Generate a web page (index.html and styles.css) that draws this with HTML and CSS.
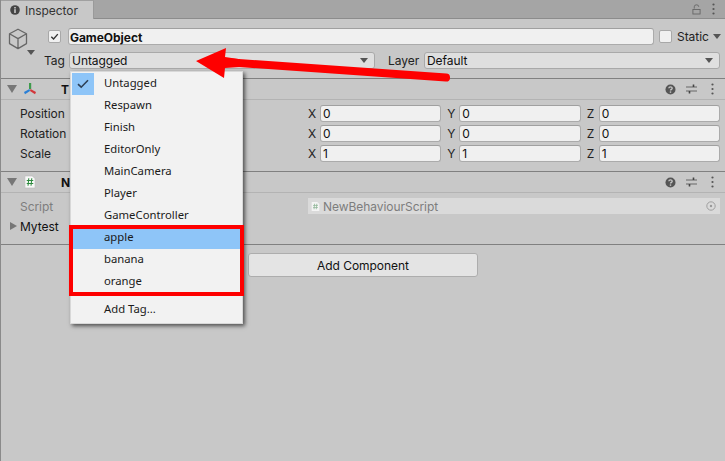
FILE: index.html
```html
<!DOCTYPE html>
<html lang="en">
<head>
<meta charset="utf-8">
<title>Inspector</title>
<link rel="stylesheet" href="styles.css">
</head>
<body>
<div class="window">
  <div class="tabbar">
    <div class="tab">
      <svg class="tab-icon" viewBox="0 0 10 10"><circle cx="5" cy="5" r="4.8" fill="#444"/><rect x="4.2" y="4.2" width="1.6" height="3.8" fill="#c8c8c8"/><rect x="4.2" y="2" width="1.6" height="1.5" fill="#c8c8c8"/></svg>
      <span>Inspector</span>
    </div>
    <div class="tab-tools">
      <svg class="lock" viewBox="0 0 10 12"><path d="M2.5 5V3a2.5 2.2 0 0 1 5 0" fill="none" stroke="#666" stroke-width="1"/><rect x="1" y="6" width="8" height="5" fill="none" stroke="#666" stroke-width="1"/></svg>
      <svg class="dots" viewBox="0 0 3 12"><circle cx="1.5" cy="1.5" r="1.1" fill="#555"/><circle cx="1.5" cy="6" r="1.1" fill="#555"/><circle cx="1.5" cy="10.5" r="1.1" fill="#555"/></svg>
    </div>
  </div>

  <section class="object">
    <div class="cube-cell">
      <svg class="cube" viewBox="0 0 20 22"><path d="M10 1.2 18.5 5.8V15.6L10 20.6 1.5 15.6V5.8Z M1.5 5.8 10 10.6 18.5 5.8 M10 10.6V20.6" fill="none" stroke="#666" stroke-width="1.3" stroke-linejoin="round"/></svg>
      <i class="tri tri-cube"></i>
    </div>
    <div class="object-fields">
      <div class="row-name">
        <span class="check"><svg viewBox="0 0 12 12"><path d="M2.5 6.2 5 8.6 9.6 3.4" fill="none" stroke="#333" stroke-width="1.5"/></svg></span>
        <span class="field name">GameObject</span>
        <span class="check static-box"></span>
        <span class="static-label">Static</span>
        <i class="tri tri-static"></i>
      </div>
      <div class="row-tag">
        <span class="tag-label">Tag</span>
        <span class="drop tag-drop">Untagged<i class="tri"></i></span>
        <span class="layer-label">Layer</span>
        <span class="drop layer-drop">Default<i class="tri"></i></span>
      </div>
    </div>
  </section>

  <section class="component">
    <header class="comp-head">
      <i class="fold"></i>
      <svg class="comp-icon" viewBox="0 0 14 14"><rect x="6" y="1" width="2.2" height="6" fill="#3f9a4c"/><path d="M6.5 7 1 10 2 12.2 7 9Z" fill="#2a7fd6"/><path d="M7.5 7 13 10 12 12.2 7 9Z" fill="#d2363a"/></svg>
      <span class="comp-title">T</span>
      <span class="head-tools">
        <svg class="help" viewBox="0 0 11 11"><circle cx="5.5" cy="5.5" r="5" fill="#555"/><path d="M3.8 4.2C3.9 2.4 7.2 2.4 7.2 4.2 7.2 5.4 5.5 5.3 5.5 6.6" fill="none" stroke="#c8c8c8" stroke-width="1.3"/><rect x="4.8" y="7.4" width="1.4" height="1.4" fill="#c8c8c8"/></svg>
        <svg class="sliders" viewBox="0 0 11 10"><path d="M0 3H11M0 7H11" stroke="#666" stroke-width="1"/><path d="M7.5 0.5V3M3.5 7V9.5" stroke="#444" stroke-width="1.6"/></svg>
        <svg class="dots" viewBox="0 0 3 12"><circle cx="1.5" cy="1.5" r="1.1" fill="#555"/><circle cx="1.5" cy="6" r="1.1" fill="#555"/><circle cx="1.5" cy="10.5" r="1.1" fill="#555"/></svg>
      </span>
    </header>
    <div class="comp-body transform">
      <div class="vec-row">
        <span class="prop">Position</span>
        <div class="vec">
          <label class="axis"><span>X</span><span class="field num">0</span></label>
          <label class="axis"><span>Y</span><span class="field num">0</span></label>
          <label class="axis"><span>Z</span><span class="field num">0</span></label>
        </div>
      </div>
      <div class="vec-row">
        <span class="prop">Rotation</span>
        <div class="vec">
          <label class="axis"><span>X</span><span class="field num">0</span></label>
          <label class="axis"><span>Y</span><span class="field num">0</span></label>
          <label class="axis"><span>Z</span><span class="field num">0</span></label>
        </div>
      </div>
      <div class="vec-row">
        <span class="prop">Scale</span>
        <div class="vec">
          <label class="axis"><span>X</span><span class="field num">1</span></label>
          <label class="axis"><span>Y</span><span class="field num">1</span></label>
          <label class="axis"><span>Z</span><span class="field num">1</span></label>
        </div>
      </div>
    </div>
  </section>

  <section class="component">
    <header class="comp-head">
      <i class="fold"></i>
      <svg class="comp-icon script-icon" viewBox="0 0 13 15"><path d="M1 1H9L12 4V14H1Z" fill="#f8f8f8" stroke="#bdbdbd" stroke-width=".8"/><path d="M5.2 3.5 4.4 11.5M8.4 3.5 7.6 11.5M3 6H10M3 9H10" stroke="#2d8a3e" stroke-width="1.1" fill="none"/></svg>
      <span class="comp-title">N</span>
      <span class="head-tools">
        <svg class="help" viewBox="0 0 11 11"><circle cx="5.5" cy="5.5" r="5" fill="#555"/><path d="M3.8 4.2C3.9 2.4 7.2 2.4 7.2 4.2 7.2 5.4 5.5 5.3 5.5 6.6" fill="none" stroke="#c8c8c8" stroke-width="1.3"/><rect x="4.8" y="7.4" width="1.4" height="1.4" fill="#c8c8c8"/></svg>
        <svg class="sliders" viewBox="0 0 11 10"><path d="M0 3H11M0 7H11" stroke="#666" stroke-width="1"/><path d="M7.5 0.5V3M3.5 7V9.5" stroke="#444" stroke-width="1.6"/></svg>
        <svg class="dots" viewBox="0 0 3 12"><circle cx="1.5" cy="1.5" r="1.1" fill="#555"/><circle cx="1.5" cy="6" r="1.1" fill="#555"/><circle cx="1.5" cy="10.5" r="1.1" fill="#555"/></svg>
      </span>
    </header>
    <div class="comp-body script">
      <div class="script-row">
        <span class="prop muted">Script</span>
        <span class="script-field">
          <svg class="mini-script" viewBox="0 0 13 15"><path d="M1 1H9L12 4V14H1Z" fill="#f4f4f4"/><path d="M5.2 3.5 4.4 11.5M8.4 3.5 7.6 11.5M3 6H10M3 9H10" stroke="#8fb596" stroke-width="1.1" fill="none"/></svg>
          <span>NewBehaviourScript</span>
          <svg class="target" viewBox="0 0 11 11"><circle cx="5.5" cy="5.5" r="4.6" fill="none" stroke="#999" stroke-width="1"/><circle cx="5.5" cy="5.5" r="1.3" fill="#999"/></svg>
        </span>
      </div>
      <div class="mytest-row"><i class="fold-right"></i><span>Mytest</span></div>
    </div>
  </section>

  <div class="add-wrap"><span class="add-btn">Add Component</span></div>

  <div class="menu">
    <div class="menu-item"><span class="menu-check"><svg viewBox="0 0 12 10"><path d="M1 5.2 4.2 8.2 11 1.2" fill="none" stroke="#2d3f55" stroke-width="1.6"/></svg></span>Untagged</div>
    <div class="menu-item">Respawn</div>
    <div class="menu-item">Finish</div>
    <div class="menu-item">EditorOnly</div>
    <div class="menu-item">MainCamera</div>
    <div class="menu-item">Player</div>
    <div class="menu-item">GameController</div>
    <div class="menu-item active">apple</div>
    <div class="menu-item">banana</div>
    <div class="menu-item">orange</div>
    <div class="menu-sep"></div>
    <div class="menu-item">Add Tag...</div>
  </div>
  <div class="highlight-box"></div>
  <svg class="arrow" viewBox="0 0 725 461"><path d="M226 48 196 61 224 78 225 68 240 67 240 59.3 225 57Z" fill="#fe0000"/><path d="M225 62 446 77.6" stroke="#fe0000" stroke-width="8" stroke-linecap="round" fill="none"/></svg>
</div>
</body>
</html>
```
FILE: styles.css
```css
* { box-sizing: border-box; }
html, body { margin: 0; padding: 0; }
body { width: 725px; height: 461px; overflow: hidden; font-family: Inter, "Liberation Sans", sans-serif; font-size: 12px; letter-spacing: -0.05px; color: #111; }
i { display: block; font-style: normal; }
svg { display: block; flex: none; }

.window { position: relative; width: 725px; height: 461px; background: #c8c8c8; border-left: 1px solid #8a8a8a; display: flex; flex-direction: column; }

.tabbar { height: 19px; flex: none; display: flex; justify-content: space-between; background: #a5a5a5; border-bottom: 1px solid #8c8c8c; }
.tab { width: 93px; height: 19px; background: #c8c8c8; display: flex; align-items: center; gap: 5px; padding-left: 9px; color: #333; font-size: 12px; border-top: 1px solid #a0a0a0; border-right: 1px solid #9a9a9a; }
.tab-icon { width: 10px; height: 10px; }
.tab-tools { display: flex; align-items: center; gap: 11px; padding-right: 10px; }
.lock { width: 9px; height: 11px; }
.dots { width: 3px; height: 12px; }

.object { height: 60px; flex: none; display: flex; border-bottom: 1px solid #808080; }
.cube-cell { width: 47px; flex: none; padding: 9px 0 0 7px; position: relative; }
.cube { width: 20px; height: 22px; }
.tri { width: 0; height: 0; border-left: 4px solid transparent; border-right: 4px solid transparent; border-top: 5px solid #555; }
.tri-cube { position: absolute; top: 31px; left: 26px; }
.object-fields { flex: 1; display: flex; flex-direction: column; padding: 9px 5px 0 0; }
.row-name { display: flex; align-items: center; height: 17px; }
.check { width: 13px; height: 13px; background: #f0f0f0; border: 1px solid #a8a8a8; border-radius: 2px; flex: none; }
.check svg { width: 11px; height: 11px; }
.field { background: #f0f0f0; border: 1px solid #ababab; border-top-color: #a0a0a0; border-radius: 3px; display: flex; align-items: center; }
.name { margin-left: 7px; width: 586px; height: 17px; padding-left: 1px; padding-top: 1px; font-weight: 700; font-size: 12px; flex: none; }
.static-box { margin-left: 5px; }
.static-label { margin-left: 5px; color: #222; }
.tri-static { margin-left: 4px; }
.row-tag { display: flex; align-items: center; height: 17px; margin-top: 7px; }
.tag-label { margin-left: -4px; width: 25px; color: #222; }
.drop { position: relative; display: flex; align-items: center; height: 17px; padding-left: 2px; background: #dfdfdf; border: 1px solid #a9a9a9; border-radius: 3px; color: #111; flex: none; }
.drop .tri { position: absolute; right: 6px; top: 5px; }
.tag-drop { width: 306px; }
.layer-label { margin-left: 13px; width: 36px; color: #222; }
.layer-drop { width: 296px; }

.component { flex: none; border-bottom: 1px solid #808080; }
.comp-head { height: 21px; display: flex; align-items: center; padding-left: 6px; border-bottom: 1px solid #b3b3b3; }
.fold { width: 0; height: 0; border-left: 5px solid transparent; border-right: 5px solid transparent; border-top: 8px solid #777; }
.comp-icon { width: 14px; height: 14px; margin-left: 6px; }
.comp-title { margin-left: 24px; font-weight: 700; }
.head-tools { margin-left: auto; display: flex; align-items: center; gap: 10px; padding-right: 11px; }
.head-tools .dots { margin-left: 4px; }
.help { width: 11px; height: 11px; }
.sliders { width: 11px; height: 10px; }

.comp-body { position: relative; }
.transform { padding: 5px 5px 9px 19px; display: flex; flex-direction: column; gap: 3px; }
.vec-row { display: flex; align-items: center; height: 17px; }
.prop { color: #222; flex: none; }
.vec { margin-left: auto; width: 412px; display: flex; gap: 6px; }
.axis { flex: 1; display: flex; align-items: center; height: 17px; }
.axis > span:first-child { width: 12px; color: #222; flex: none; }
.num { flex: 1; height: 17px; padding-left: 2px; }

.script { height: 51px; padding: 5px 5px 0 19px; }
.script-row { display: flex; align-items: center; height: 16px; }
.muted { color: #7d7d7d; }
.script-field { margin-left: auto; width: 412px; height: 16px; background: #dadada; display: flex; align-items: center; padding: 0 4px 0 3px; color: #7d7d7d; }
.mini-script { width: 9px; height: 11px; margin-right: 3px; }
.target { width: 10px; height: 10px; margin-left: auto; }
.mytest-row { display: flex; align-items: center; height: 16px; margin-top: 4px; margin-left: -10px; }
.fold-right { width: 0; height: 0; border-top: 4px solid transparent; border-bottom: 4px solid transparent; border-left: 7px solid #777; margin-right: 3px; }

.add-wrap { padding: 8px 0 0 247px; }
.add-btn { width: 230px; height: 24px; background: #e4e4e4; border: 1px solid #adadad; border-radius: 3px; display: flex; align-items: center; justify-content: center; color: #111; }

.menu { position: absolute; left: 69px; top: 71px; width: 173px; height: 253px; background: #f2f2f2; border: 1px solid #d8d8d8; padding: 1px 2px 1px 1px; box-shadow: 2px 2px 4px rgba(0,0,0,.6); font-family: "Noto Sans", "Open Sans", sans-serif; font-size: 11.3px; letter-spacing: 0; color: #1a1a1a; z-index: 1; }
.menu-item { position: relative; height: 22px; display: flex; align-items: center; padding: 0 0 3px 32px; }
.menu-item.active { background: #8ec5f8; }
.menu-check { position: absolute; left: 0; top: 0; width: 22px; height: 22px; background: #8ec5f8; display: flex; align-items: center; justify-content: center; }
.menu-check svg { width: 12px; height: 10px; }
.menu-sep { height: 1px; margin: 2px 0 3px; background: #d6d6d6; }

.highlight-box { position: absolute; left: 68px; top: 225px; width: 175px; height: 71px; border: 4px solid #fe0000; z-index: 2; }
.arrow { position: absolute; left: -1px; top: 0; width: 725px; height: 461px; z-index: 3; pointer-events: none; }
```
